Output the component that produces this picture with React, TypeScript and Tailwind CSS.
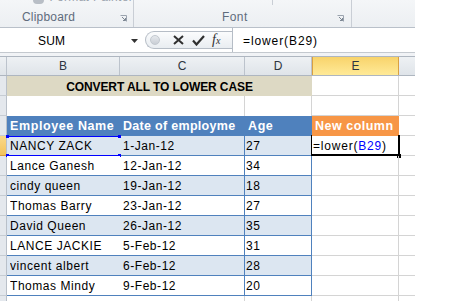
import React from "react";

const FONT = "font-['Liberation_Sans',Arial,sans-serif]";

type Row = { name: string; date: string; age: string };
const rows: Row[] = [
  { name: "NANCY ZACK", date: "1-Jan-12", age: "27" },
  { name: "Lance Ganesh", date: "12-Jan-12", age: "34" },
  { name: "cindy queen", date: "19-Jan-12", age: "18" },
  { name: "Thomas Barry", date: "23-Jan-12", age: "27" },
  { name: "David Queen", date: "26-Jan-12", age: "35" },
  { name: "LANCE JACKIE", date: "5-Feb-12", age: "31" },
  { name: "vincent albert", date: "6-Feb-12", age: "28" },
  { name: "Thomas Mindy", date: "9-Feb-12", age: "20" },
];

function Launcher() {
  return (
    <svg width="7" height="7" viewBox="0 0 7 7" className="block">
      <path d="M0.5 0.5 H6.5 V6.5" fill="none" stroke="#9aa3ae" strokeWidth="1" />
      <path d="M2 2 L5.5 5.5 M5.5 3 V5.5 H3" fill="none" stroke="#7d8793" strokeWidth="1" />
    </svg>
  );
}

function Ribbon() {
  return (
    <div className="h-[28px] shrink-0 flex bg-gradient-to-b from-[#f4f6f8] to-[#eceff2] border-b border-[#b9c0c9] overflow-hidden">
      {/* Clipboard group */}
      <div className="w-[134px] h-full border-r border-[#c9ced5] flex flex-col">
        <div className="flex items-start h-[4px] shrink-0 pl-[33px] gap-[5px]">
          <div className="w-[12px] h-[6px] rounded-b-[4px] bg-[#b8bec6] -mt-[2px]" />
          <span className="text-[12px] leading-[12px] text-[#9aa3ad] mt-[-9px] tracking-[0.3px] whitespace-nowrap">Format Painter</span>
        </div>
        <div className="flex items-center h-[23px] shrink-0 pl-[22px] pr-[6px]">
          <span className="text-[12px] leading-[14px] text-[#5f6c7c] tracking-[0.2px] flex-1 pt-[3px]">Clipboard</span>
          <div className="pt-[5px]"><Launcher /></div>
        </div>
      </div>
      {/* Font group */}
      <div className="w-[218px] h-full border-r border-[#c9ced5] flex flex-col">
        <div className="h-[4px] shrink-0 flex">
          <div className="ml-[138px] w-[1px] h-[5px] bg-[#c9ced5]" />
        </div>
        <div className="flex items-center h-[23px] shrink-0 pl-[88px] pr-[7px]">
          <span className="text-[12px] leading-[14px] text-[#5f6c7c] tracking-[0.4px] flex-1 pt-[3px]">Font</span>
          <div className="pt-[5px]"><Launcher /></div>
        </div>
      </div>
      <div className="flex-1 h-full" />
    </div>
  );
}

function FormulaBar() {
  return (
    <div className="h-[25px] shrink-0 flex items-stretch bg-white border-b border-[#c4c9cf]">
      <div className="w-[145px] flex items-center pt-[2px]">
        <span className="w-[131px] pl-[38px] text-[12px] text-black tracking-[0.2px]">SUM</span>
        <svg width="7" height="4" viewBox="0 0 7 4" className="block">
          <path d="M0 0 H7 L3.5 4 Z" fill="#333" />
        </svg>
      </div>
      <div className="w-[87px] my-[3px] flex items-center rounded-l-full border border-r-0 border-[#b6bdc6] bg-gradient-to-b from-[#fbfcfd] to-[#e9edf1]">
        <div className="ml-[4px] w-[10px] h-[10px] rounded-full bg-gradient-to-b from-[#e6e9ed] to-[#c9ced5] border border-[#c2c8cf]" />
        <svg width="11" height="10" viewBox="0 0 11 10" className="block ml-[13px]">
          <path d="M1 1 L10 9 M10 1 L1 9" stroke="#2f2f2f" strokeWidth="2" />
        </svg>
        <svg width="13" height="11" viewBox="0 0 13 11" className="block ml-[8px]">
          <path d="M1 5.5 L4.5 9.5 L12 1" fill="none" stroke="#2f2f2f" strokeWidth="2.2" />
        </svg>
        <span className="ml-[7px] text-[14px] italic font-['Liberation_Serif',serif] text-[#2f2f2f] leading-none">
          f<span className="text-[10px]">x</span>
        </span>
      </div>
      <div className="flex-1 border-l border-[#b6bdc6] flex items-center pl-[10px] pt-[2px]">
        <span className="text-[12px] text-black tracking-[0.9px]">=lower(B29)</span>
      </div>
    </div>
  );
}

const gridR = "border-r border-[#d4d4d4]";
const gridB = "border-b border-[#d4d4d4]";

function RowHeader({ active = false, last = false }: { active?: boolean; last?: boolean }) {
  return (
    <div
      className={
        "w-[7px] shrink-0 border-r border-[#b9c0c9] " +
        (last ? "" : "border-b ") +
        (active ? "bg-gradient-to-b from-[#f9d98a] to-[#f3c35a] border-b-[#d49a3c]" : "bg-[#e4e8ed] border-b-[#c6ccd3]")
      }
    />
  );
}

function ColumnHeaders() {
  const cell = "h-full shrink-0 flex items-center justify-center text-[12px] text-[#2d3540] border-r border-[#bcc3cc]";
  return (
    <div className="h-[20px] shrink-0 flex border-y border-[#aeb6c0] bg-gradient-to-b from-[#eef1f4] to-[#dfe4e9]">
      <div className="w-[7px] shrink-0 h-full border-r border-[#bcc3cc]" />
      <div className={cell + " w-[113px]"}>B</div>
      <div className={cell + " w-[125px]"}>C</div>
      <div className={cell + " w-[67px]"}>D</div>
      <div className="w-[87px] shrink-0 h-full flex items-center justify-center text-[12px] text-[#2d3540] bg-gradient-to-b from-[#f8d36a] to-[#ffea97] border-x border-[#d9a042]">E</div>
      <div className="flex-1 h-full" />
    </div>
  );
}

function App() {
  const dataText = "text-[12px] text-black tracking-[0.55px] whitespace-nowrap overflow-hidden";
  return (
    <div className={"w-[453px] h-[301px] bg-white overflow-hidden flex " + FONT}>
      <div className="w-[415px] shrink-0 flex flex-col">
        <Ribbon />
        <FormulaBar />
        <div className="h-[3px] shrink-0 bg-[#f1f3f6]" />
        <ColumnHeaders />

        {/* Title row */}
        <div className="h-[20px] flex shrink-0">
          <RowHeader />
          <div className="w-[305px] shrink-0 bg-[#ddd9c4] flex items-center justify-center pt-[1px]">
            <span className="text-[12px] font-bold text-black tracking-[-0.1px]">CONVERT ALL TO LOWER CASE</span>
          </div>
          <div className={"w-[87px] shrink-0 " + gridR + " " + gridB} />
          <div className={"flex-1 " + gridB} />
        </div>

        {/* Empty row */}
        <div className="h-[20px] flex shrink-0">
          <RowHeader />
          <div className="w-[113px] shrink-0" />
          <div className={"w-[125px] shrink-0 " + gridR} />
          <div className={"w-[67px] shrink-0 " + gridR} />
          <div className={"w-[87px] shrink-0 " + gridR + " " + gridB} />
          <div className={"flex-1 " + gridB} />
        </div>

        {/* Table header row */}
        <div className="h-[20px] flex shrink-0">
          <RowHeader />
          <div className="w-[113px] shrink-0 bg-[#4f81bd] flex items-center pl-[3px] pt-[1px]">
            <span className="text-[12.5px] font-bold text-white tracking-[0.6px] whitespace-nowrap">Employee Name</span>
          </div>
          <div className="w-[125px] shrink-0 bg-[#4f81bd] flex items-center pl-[3px] pt-[1px] overflow-hidden">
            <span className="text-[12.5px] font-bold text-white tracking-[0.3px] whitespace-nowrap">Date of employme</span>
          </div>
          <div className="w-[67px] shrink-0 bg-[#4f81bd] flex items-center pl-[3px] pt-[1px]">
            <span className="text-[12.5px] font-bold text-white tracking-[0.6px]">Age</span>
          </div>
          <div className="w-[87px] shrink-0 bg-[#f79646] flex items-center pl-[3px] pt-[1px]">
            <span className="text-[12.5px] font-bold text-white tracking-[0.5px] whitespace-nowrap">New column</span>
          </div>
          <div className={"flex-1 " + gridB} />
        </div>

        {/* Data rows */}
        {rows.map((r, i) => {
          const bg = i % 2 === 0 ? "bg-[#dce6f1]" : "bg-white";
          const first = i === 0;
          return (
            <div key={i} className="h-[20px] flex shrink-0">
              <RowHeader active={first} />
              <div className={"relative w-[113px] shrink-0 flex items-center pl-[3px] pt-[1px] border-b border-[#4f81bd] " + bg}>
                <span className={dataText}>{r.name}</span>
                {first && (
                  <>
                    <div className="absolute left-0 right-0 top-[0px] h-[1px] bg-[#0000ff]" />
                    <div className="absolute left-0 right-0 bottom-[-1px] h-[1px] bg-[#0000ff]" />
                    <div className="absolute left-[-1px] top-[-1px] w-[3px] h-[3px] bg-[#0000ff]" />
                    <div className="absolute right-[-1px] top-[-1px] w-[3px] h-[3px] bg-[#0000ff]" />
                    <div className="absolute left-[-1px] bottom-[-2px] w-[3px] h-[3px] bg-[#0000ff]" />
                    <div className="absolute right-[-1px] bottom-[-2px] w-[3px] h-[3px] bg-[#0000ff]" />
                  </>
                )}
              </div>
              <div className={"w-[125px] shrink-0 flex items-center pl-[3px] pt-[1px] border-b border-r border-[#4f81bd] " + bg}>
                <span className={dataText}>{r.date}</span>
              </div>
              <div className={"w-[67px] shrink-0 flex items-center pl-[1px] pt-[1px] border-b border-r border-[#4f81bd] " + bg}>
                <span className={dataText}>{r.age}</span>
              </div>
              <div className={"relative w-[87px] shrink-0 flex items-center pl-[1px] pt-[1px] " + gridR + " " + gridB}>
                {first && (
                  <>
                    <span className="text-[12px] text-black tracking-[0.8px] whitespace-nowrap">
                      =lower(<span className="text-[#0000ff]">B29</span>)
                    </span>
                    <div className="absolute left-[-1px] top-[-1px] right-[-2px] bottom-[-1px] border-2 border-black border-l-[1px] border-t-0" />
                    <div className="absolute right-[-3px] bottom-[-3px] w-[4px] h-[4px] bg-black" />
                  </>
                )}
              </div>
              <div className={"flex-1 " + gridB} />
            </div>
          );
        })}

        {/* Partial next row */}
        <div className="h-[20px] flex shrink-0">
          <RowHeader last />
          <div className="w-[113px] shrink-0" />
          <div className={"w-[125px] shrink-0 " + gridR} />
          <div className={"w-[67px] shrink-0 " + gridR} />
          <div className={"w-[87px] shrink-0 " + gridR} />
          <div className="flex-1" />
        </div>
      </div>
      <div className="flex-1 bg-white" />
    </div>
  );
}

export default App;
